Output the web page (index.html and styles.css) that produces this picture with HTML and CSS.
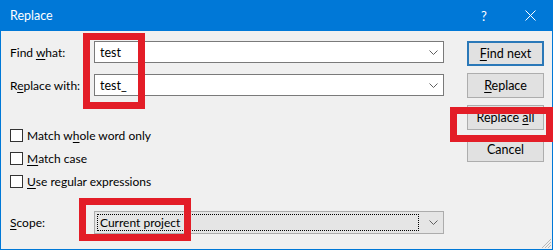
FILE: index.html
```html
<!DOCTYPE html>
<html lang="en">
<head>
    <meta charset="UTF-8">
    <title>Replace</title>
    <link rel="stylesheet" href="styles.css">
</head>
<body>
    <div class="window">
        <div class="title-bar">
            <span class="title">Replace</span>
            <span class="title-help">?</span>
            <span class="title-close">
                <svg width="11" height="11" viewBox="0 0 11 11"><path d="M0.5 0.5 L10.5 10.5 M10.5 0.5 L0.5 10.5" stroke="#fff" stroke-width="1"/></svg>
            </span>
        </div>

        <div class="content">
            <div class="form">
                <div class="field-row">
                    <label class="field-label">Find <u>w</u>hat:</label>
                    <div class="combo">
                        <span class="combo-text">test</span>
                        <svg class="chevron" width="9" height="5" viewBox="0 0 9 5"><path d="M0.5 0.5 L4.5 4.5 L8.5 0.5" fill="none" stroke="#606060"/></svg>
                    </div>
                </div>
                <div class="field-row">
                    <label class="field-label">R<u>e</u>place with:</label>
                    <div class="combo">
                        <span class="combo-text">test_</span>
                        <svg class="chevron" width="9" height="5" viewBox="0 0 9 5"><path d="M0.5 0.5 L4.5 4.5 L8.5 0.5" fill="none" stroke="#606060"/></svg>
                    </div>
                </div>

                <div class="options">
                    <div class="check-row"><span class="checkbox"></span>Match w<u>h</u>ole word only</div>
                    <div class="check-row"><span class="checkbox"></span><u>M</u>atch case</div>
                    <div class="check-row"><span class="checkbox"></span><u>U</u>se regular expressions</div>
                </div>

                <div class="field-row scope-row">
                    <label class="field-label"><u>S</u>cope:</label>
                    <div class="combo select">
                        <span class="select-focus">Current project</span>
                        <svg class="chevron" width="9" height="5" viewBox="0 0 9 5"><path d="M0.5 0.5 L4.5 4.5 L8.5 0.5" fill="none" stroke="#606060"/></svg>
                    </div>
                </div>
            </div>

            <div class="buttons">
                <button class="btn btn-default"><u>F</u>ind next</button>
                <button class="btn"><u>R</u>eplace</button>
                <button class="btn">Replace <u>a</u>ll</button>
                <button class="btn">Cancel</button>
            </div>
        </div>

        <svg class="grip" width="12" height="12" viewBox="0 0 12 12">
            <path d="M11 2 L2 11 M11 5 L5 11 M11 8 L8 11" stroke="#b8b8b8" stroke-width="1"/>
        </svg>

        <!-- annotation boxes -->
        <div class="mark mark-inputs"></div>
        <div class="mark mark-replace-all"></div>
        <div class="mark mark-scope"></div>
    </div>
</body>
</html>
```

FILE: styles.css
```css
* {
    margin: 0;
    padding: 0;
    box-sizing: border-box;
}

body {
    font-family: 'Lato', 'Liberation Sans', sans-serif;
    font-size: 12px;
    color: #000;
    background: #f0f0f0;
}

.window {
    position: relative;
    width: 553px;
    height: 250px;
    background: #f0f0f0;
    border: 1px solid #0078d7;
    border-top: none;
}

.title-bar {
    height: 31px;
    margin: 0 -1px;
    background: #0078d7;
    color: #fff;
    display: flex;
    align-items: center;
    padding-left: 10px;
}

.title {
    flex: 1;
    font-size: 12.5px;
}

.title-help {
    width: 46px;
    text-align: center;
    font-size: 13px;
}

.title-close {
    width: 46px;
    display: flex;
    justify-content: center;
}

.content {
    display: flex;
    padding: 10px 0 0 9px;
}

.form {
    width: 435px;
}

.field-row {
    display: flex;
    align-items: center;
    height: 22px;
}

.field-row + .field-row {
    margin-top: 11px;
}

.field-label {
    width: 84px;
    flex-shrink: 0;
}

.field-label u,
.check-row u,
.btn u {
    text-decoration-thickness: 1px;
    text-underline-offset: 2px;
}

.combo {
    position: relative;
    width: 350px;
    height: 22px;
    background: #fff;
    border: 1px solid #7a7a7a;
    display: flex;
    align-items: center;
    padding-left: 5px;
}

.combo-text {
    flex: 1;
    font-size: 12.5px;
}

.chevron {
    margin-right: 5px;
}

.options {
    margin-top: 28px;
}

.check-row {
    height: 23px;
    display: flex;
    align-items: center;
}

.checkbox {
    width: 13px;
    height: 13px;
    border: 1px solid #333;
    background: #fff;
    margin-right: 4px;
}

.scope-row {
    margin-top: 18px;
    height: 23px;
}

.select {
    height: 23px;
    background: #e5e5e5;
    border-color: #acacac;
    padding-left: 2px;
}

.select-focus {
    flex: 1;
    height: 17px;
    line-height: 15px;
    border: 1px dotted #000;
    padding-left: 2px;
    margin-right: 10px;
}

.buttons {
    display: flex;
    flex-direction: column;
    gap: 7px;
    margin-left: 22px;
}

.btn {
    width: 77px;
    height: 25px;
    font-family: inherit;
    font-size: 12.5px;
    color: #000;
    background: #e1e1e1;
    border: 1px solid #adadad;
}

.btn-default {
    border: 2px solid #2a78b8;
}

.grip {
    position: absolute;
    right: 0;
    bottom: 0;
}

.mark {
    position: absolute;
    border: 7px solid #e31d27;
}

.mark-inputs {
    left: 82px;
    top: 33px;
    width: 62px;
    height: 76px;
}

.mark-replace-all {
    left: 449px;
    top: 107px;
    width: 103px;
    height: 35px;
}

.mark-scope {
    left: 78px;
    top: 198px;
    width: 112px;
    height: 43px;
}
```
